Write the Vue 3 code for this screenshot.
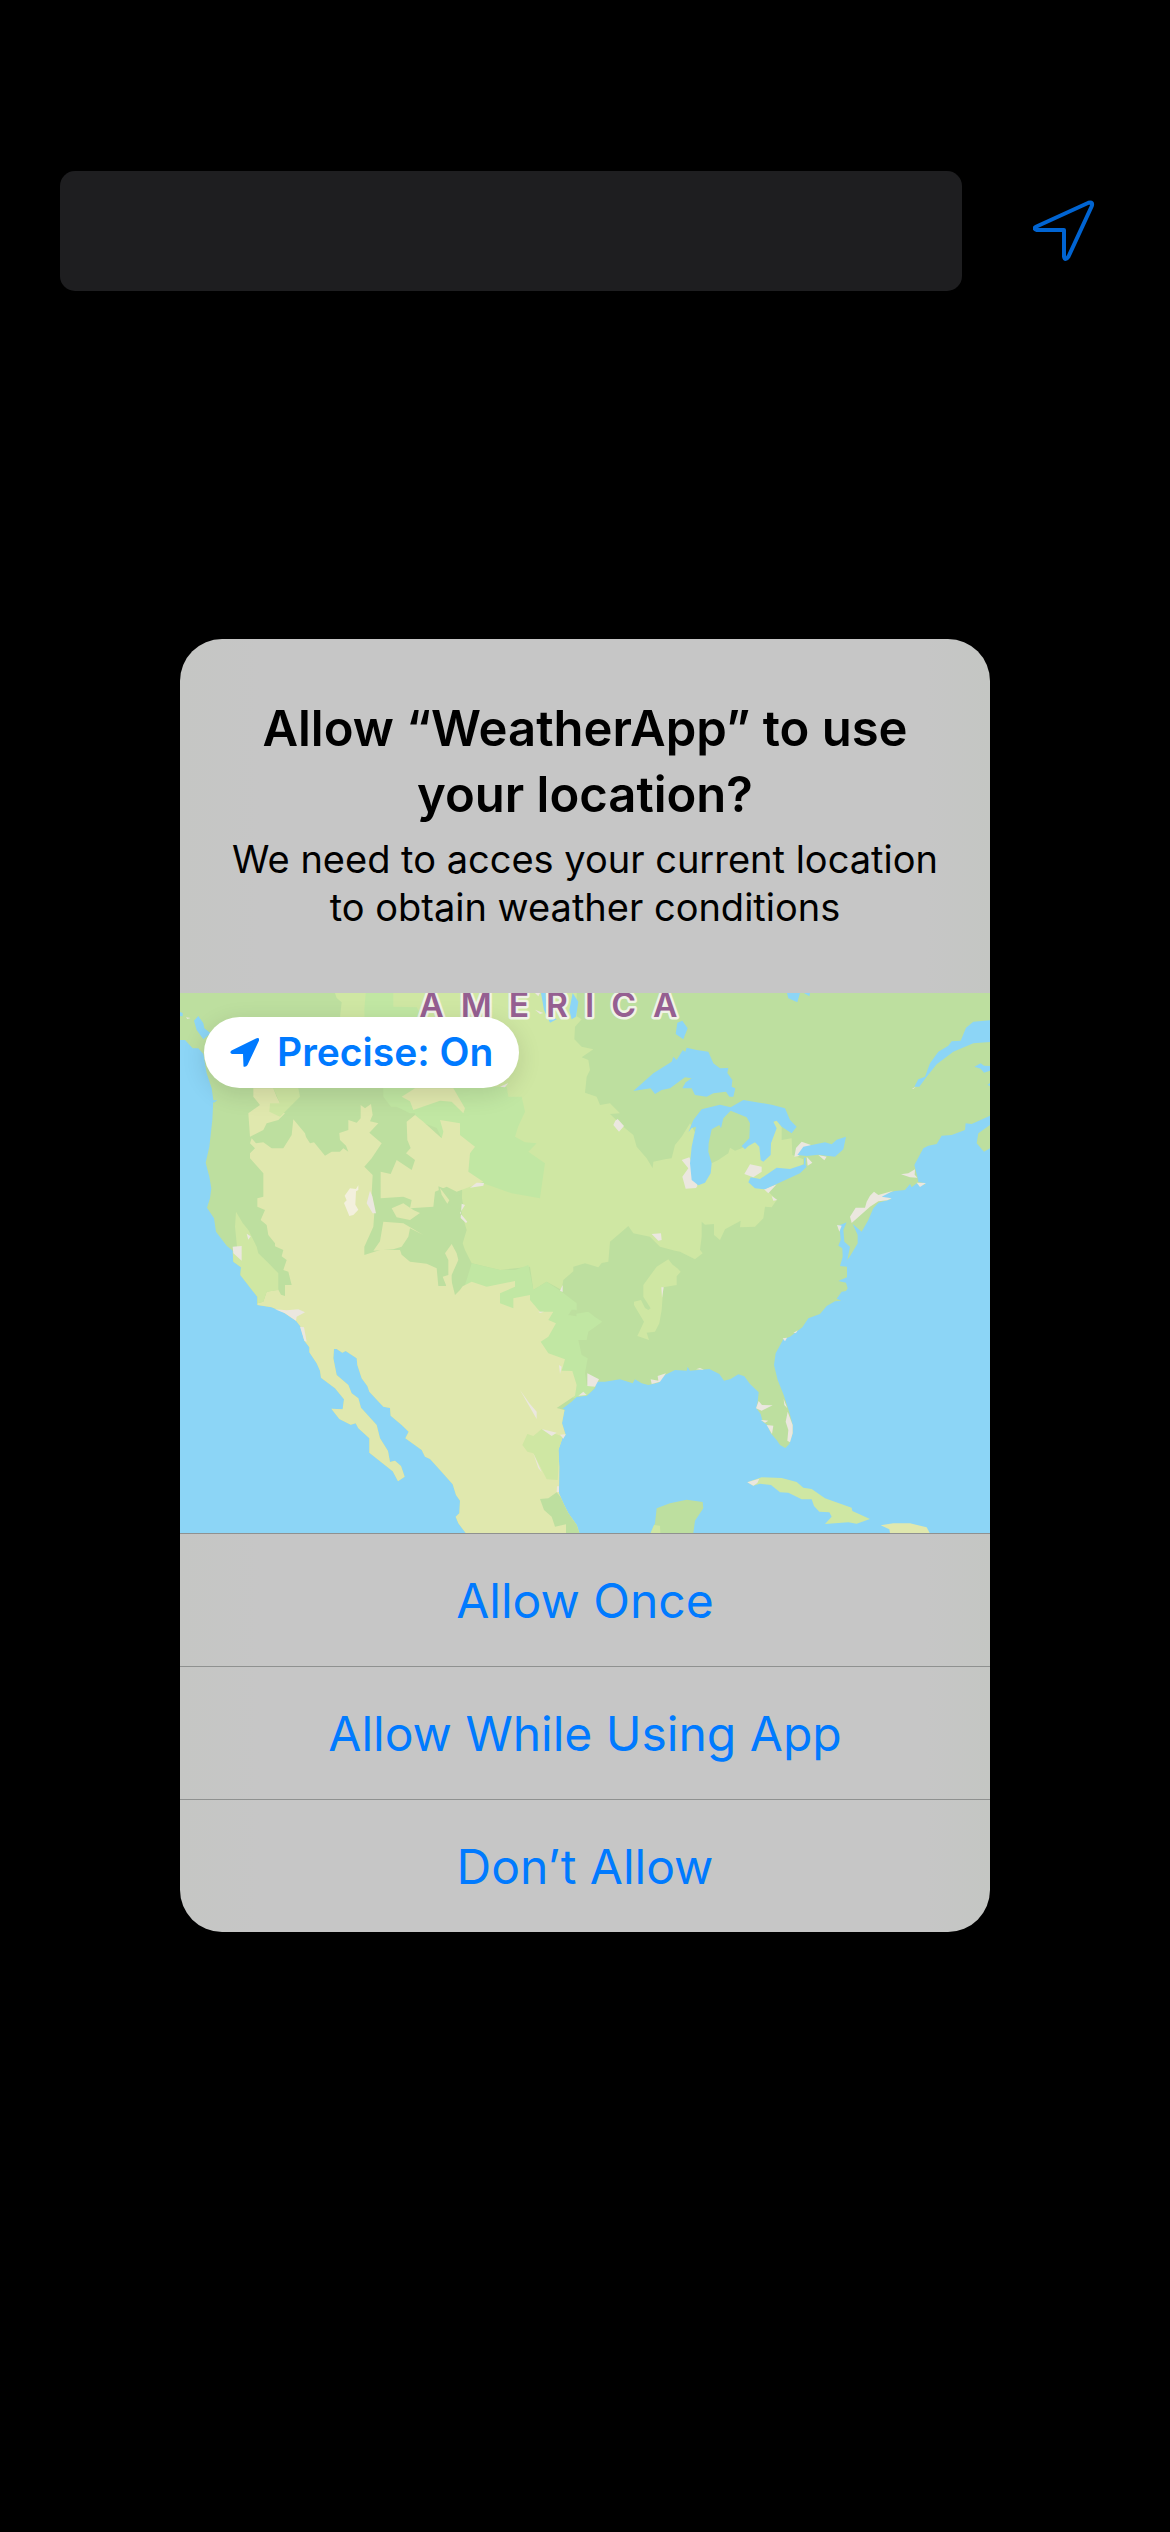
<script setup>
import { ref } from 'vue'

const query = ref('')
const precise = ref(true)
const choices = ['Allow Once', 'Allow While Using App', 'Don’t Allow']

const land =
  'M0 0V141L15 141 38 166 55 166 70 183 80 241 95 286 100 321 97 381 88 461 77 509 88 551 94 586 90 616 81 644 102 676 108 716 140 758 158 773 160 806 183 823 181 846 220 896 232 911 232 936 275 943 310 958 348 983 362 1001 373 1043 388 1063 388 1078 410 1111 420 1133 423 1154 465 1186 492 1219 488 1249 454 1247 478 1278 512 1295 527 1291 535 1306 568 1336 568 1379 638 1435 654 1465 674 1451 663 1419 645 1403 630 1407 624 1374 600 1336 590 1296 543 1244 535 1216 515 1201 505 1176 470 1146 460 1096 462 1068 470 1068 487 1079 497 1074 530 1096 532 1116 545 1156 562 1179 568 1196 610 1241 630 1245 632 1268 665 1296 686 1316 676 1336 725 1371 735 1391 750 1398 780 1431 818 1474 828 1506 840 1523 838 1561 827 1571 835 1591 857 1620 1198 1620 1190 1596 1165 1561 1150 1531 1137 1501 1138 1421 1135 1371 1147 1336 1157 1326 1146 1291 1154 1249 1147 1247 1175 1226 1190 1211 1220 1208 1245 1186 1250 1166 1275 1166 1320 1159 1358 1171 1365 1159 1385 1171 1405 1176 1435 1169 1455 1146 1485 1131 1520 1133 1523 1121 1530 1133 1588 1128 1618 1143 1632 1163 1652 1158 1675 1144 1693 1150 1710 1173 1736 1198 1733 1226 1729 1246 1742 1263 1748 1286 1762 1296 1772 1321 1790 1341 1800 1356 1816 1365 1828 1353 1838 1321 1838 1296 1828 1258 1811 1206 1793 1161 1782 1116 1787 1081 1810 1039 1830 1031 1867 1003 1885 976 1920 963 1940 939 1965 925 1984 923 1970 917 1985 896 1998 894 2003 886 1998 869 1975 864 2001 853 2001 821 1980 819 1988 791 1987 766 1975 758 1982 741 1980 716 1973 698 1988 693 2000 688 1990 711 1993 746 2010 761 2002 801 2010 790 2033 751 2033 726 2018 693 2045 716 2065 681 2080 646 2095 629 2135 618 2100 616 2110 604 2145 594 2175 591 2190 573 2195 583 2210 571 2235 575 2235 571 2215 567 2212 551 2203 516 2230 466 2245 458 2270 453 2285 428 2315 426 2355 411 2357 391 2375 393 2430 368V0Z'
</script>

<template>
  <main class="screen">
    <form class="search" role="search" @submit.prevent>
      <input v-model="query" class="field" type="text" aria-label="City" />
      <button class="locate" type="button" aria-label="Use current location">
        <svg viewBox="0 0 62 62" aria-hidden="true">
          <path d="M3.500 26.500 55.500 2.800Q60.500 1.500 58.600 6.500L35.500 56.500Q32 61.500 31 56.500V30H4Q-.5 28.500 3.500 26.500Z" />
        </svg>
      </button>
    </form>

    <section class="alert" role="alertdialog" aria-labelledby="alert-title" aria-describedby="alert-text">
      <header class="message">
        <h1 id="alert-title">Allow “WeatherApp” to use your location?</h1>
        <p id="alert-text">We need to acces your current location to obtain weather conditions</p>
      </header>

      <div class="map">
        <svg viewBox="0 0 2430 1620" aria-hidden="true">
          <defs>
            <clipPath id="land-clip"><path :d="land" /></clipPath>
          </defs>
          <path class="wood" :d="land" />
          <g clip-path="url(#land-clip)">
            <!-- prairie, coastal valleys and the Appalachians -->
            <path class="plain" d="M465 0 470 15 485 28 480 71 600 100 600 290 850 400 845 661 860 711 848 751 855 771 875 811 960 831 1050 821 1060 891 1100 866 1145 891 1150 861 1180 835 1180 821 1215 811 1255 823 1265 810 1285 806 1290 746 1320 721 1345 699 1360 721 1410 731 1440 761 1485 773 1500 776 1545 799 1568 781 1560 770 1565 731 1565 686 1575 695 1602 693 1602 726 1620 741 1635 709 1682 683 1680 703 1725 701 1750 676 1755 641 1775 643 1790 621 1760 591 1870 513 1870 499 1837 486 1835 436 1805 441 1805 401 1790 380 1780 386 1760 460 1720 446 1685 466 1665 473 1650 464 1645 481 1615 501 1595 511 1530 391 1505 431 1485 456 1475 496 1455 499 1420 506 1418 526 1400 496 1370 461 1360 426 1330 401 1290 363 1320 361 1290 331 1260 336 1250 311 1215 299 1220 251 1230 231 1225 201 1205 193 1240 169 1205 161 1183 139 1185 101 1205 79 1190 70 1190 0Z" />
            <path class="wood" d="M600 280H700L665 345 705 361 680 386 682 441 678 481 705 501 640 600 600 600Z" />
            <path class="mint" d="M557 0H640V41L710 43 725 71V120H555L553 50ZM610 281H980L985 311 1025 311 1035 356 1015 400 1005 431 1035 448 1070 451 1045 476 1095 511 1080 616 995 601 910 571 840 586 780 490 785 436 770 405 705 380 705 361 690 361 650 341 633 341 610 311Z" />
            <path class="mint" d="M848 895 860 860 875 811 960 831 1005 831 1045 816 1060 891 1100 866 1145 896 1190 931 1190 951 1165 966 1225 956 1245 972 1267 986 1225 1016 1220 1041 1195 1041 1205 1086 1223 1096 1215 1141 1220 1176 1245 1181 1220 1215 1180 1215 1000 1000Z" />
            <path class="wood" d="M1165 966 1175 950H1187L1190 970Z" />
            <path class="sand" d="M210 481 225 466 210 451 215 436 228 451 250 448 275 466 310 466 335 426 340 379 375 421 378 432 390 451 402 448 435 488 455 476 480 476 490 466 505 476 498 458 480 441 478 420 505 411 505 381 530 389 542 376 542 336 555 346 573 333 578 366 570 385 595 391 568 419 605 451 575 496 553 521 578 546 575 601 583 660 580 701 553 761 553 786 600 771 660 771 665 785 690 806 740 812 770 826 775 879 798 879 798 853 810 846 825 906 840 891 848 880 875 866 920 881 1005 864 1005 881 960 901 960 931 1000 946 1000 916 1050 906 1050 921 1080 956 1120 956 1105 981 1128 991 1105 1031 1082 1046 1105 1081 1155 1099 1145 1133 1177 1134 1190 1176 1185 1208 1130 1245 1300 1290 1300 1620 300 1620 200 940 232 931 250 926 260 896 295 890 303 905 315 909 315 876 335 876 325 836 310 831 320 801 305 790 310 771 285 760 285 751 265 726 260 696 242 681 255 651 232 641 232 616 250 611 250 541 210 496ZM220 286H280L290 311 303 336 270 350 315 361 295 381 260 391 250 411 210 431 205 361 240 336 220 311Z" />
            <path class="plain" d="M280 286H355L360 311 300 371 268 356 270 331 300 331ZM168 656 188 690 205 711 230 761 235 781 265 810 295 841V891L260 896 250 926 200 940 120 800 172 770 165 701Z" />
            <path class="sand" d="M705 366 680 386 682 441 692 465 678 481 705 501 695 531 650 501 632 543 602 536V616L670 611 695 621 690 646 760 641 765 596 800 581 830 596 870 581 910 566 865 536 870 481 885 461 840 426V391L780 381 790 416 785 436 730 386ZM665 311 705 286H820L855 346 850 361 815 326 780 323 700 351 690 325ZM610 686 670 691 730 726 690 706 685 731 665 761 640 769 580 773 600 745ZM635 646 670 631 700 651 720 660 690 681 650 673ZM795 781 815 753 830 781 835 801 815 846V896L800 881 788 851 805 846V801Z" />
            <path class="wood" d="M775 580 790 586 810 605 845 610 850 640 835 650 780 620Z" />
            <path class="sand" d="M780 585 808 622 802 632 785 605Z" />
            <path class="plain" d="M1465 799 1478 815 1492 826 1502 836 1490 850V876L1450 883 1445 951 1438 991 1425 1016 1400 1019 1407 1041 1372 1029 1392 986 1362 936V926L1383 921 1395 945 1405 951 1412 946 1390 911V876L1430 821ZM1085 1308 1150 1331 1138 1380 1133 1461 1100 1459 1060 1381 1042 1376 1027 1356 1042 1323 1060 1329Z" />
            <path class="wood" d="M1080 1518 1105 1516 1130 1498 1230 1620H1158V1594L1125 1601 1115 1571 1092 1551Z" />
          </g>

          <!-- islands and peninsulas off the mainland -->
          <path class="wood" d="M2430 396 2395 421 2390 451 2412 476 2430 466ZM1412 1620 1425 1591 1430 1546 1470 1531 1520 1520 1568 1527 1570 1546 1545 1583 1540 1620Z" />
          <path class="plain" d="M1412 1620 1422 1596 1440 1598 1441 1620ZM1702 1468 1745 1453 1805 1455 1850 1467 1870 1484 1895 1488 1935 1516 2015 1544 2017 1554 2070 1578 2030 1592 2005 1588 1935 1593 1955 1571 1948 1558 1918 1556 1902 1539 1895 1519 1865 1519 1825 1499 1800 1498 1773 1476 1740 1472 1720 1478Z" />
          <path class="sand" d="M2102 1597 2140 1591 2190 1591 2240 1603 2249 1620 2130 1620 2128 1609Z" />

          <!-- towns -->
          <path class="town" d="M1505 501 1528 493 1540 520 1552 579 1548 585 1517 587 1507 551 1525 526ZM1300 396 1306 383 1313 378 1332 399 1317 416ZM1693 543 1710 514 1745 521V536L1720 553ZM1843 491 1848 465 1865 446 1893 456 1855 490ZM1880 491 1897 509 1883 518ZM1752 589 1790 574 1765 601ZM1775 609 1792 621 1780 623ZM1915 486 1940 491 1933 502ZM2060 626 2070 608 2082 596 2095 606 2140 593 2105 611 2135 616 2122 622 2095 625 2070 641 2015 690 2010 671 2027 644 2055 644ZM2163 544 2185 541 2205 529 2204 545 2212 554 2190 553ZM2210 569 2238 570 2220 582ZM1971 696 1985 698 1978 716ZM158 761 185 759V803L160 781ZM200 722 212 730 205 740ZM285 949 320 952 355 949 375 958 350 971 348 983 315 961ZM360 1001 372 1003 380 1046 373 1043ZM1222 1141 1257 1159 1245 1181 1222 1179ZM1195 1208 1210 1196 1220 1206ZM1412 1159 1435 1163 1433 1149 1458 1141 1440 1166 1415 1173ZM1548 1129 1560 1125 1572 1130ZM1415 723 1443 721 1445 741 1435 743ZM1736 1224 1746 1236 1778 1237 1745 1253 1728 1246ZM1742 1281 1765 1283 1755 1289ZM1760 1296 1780 1298 1776 1323ZM1811 1218 1822 1246 1813 1236ZM1823 1256 1838 1296 1838 1321 1830 1348 1822 1343 1825 1311 1817 1286ZM1808 1036 1821 1034 1815 1045ZM1840 1020 1853 1012 1848 1020ZM1702 1468 1738 1457 1732 1470 1720 1478ZM845 632 855 636 840 660 862 686 858 690 842 675ZM870 584 890 569 912 570 910 578ZM960 281 985 270 975 283ZM1140 893 1148 876V897ZM1137 1116 1145 1121 1140 1143ZM1085 1308 1130 1319 1115 1329ZM1140 1325 1157 1324 1150 1337ZM1020 1191 1048 1231 1070 1256V1278ZM1060 1381 1085 1438 1075 1425ZM1444 883H1451L1446 915ZM1131 1480H1137V1497H1130ZM570 593 577 610 588 661H578L560 631ZM1075 956H1092L1080 960ZM18 73 32 75 22 78ZM1065 50 1090 60 1080 63ZM1065 0H1080L1075 10ZM2196 288 2210 279 2200 288Z" />
          <path class="salt" d="M510 586 528 588 535 577V591L528 595 526 635 535 650 520 666 508 669 492 630 500 622 494 608Z" />

          <!-- lakes, sounds and the St. Lawrence -->
          <path class="water" d="M1360 294 1420 241 1475 206 1480 191 1490 201 1508 172 1516 176 1520 164 1550 171 1585 176 1600 211 1620 226 1645 225 1642 240 1657 261 1655 281 1666 286 1660 311 1648 311 1638 296 1600 301 1580 311 1545 306 1535 286 1507 286 1517 268 1535 256 1515 253 1470 286 1445 291 1425 303 1412 286ZM1507 83 1523 106 1510 139 1487 123 1492 89ZM1525 418 1540 381 1565 349 1620 335 1652 343 1690 321 1775 335 1815 346 1830 381 1850 401 1835 421 1805 401 1790 383 1780 386 1790 406 1773 451 1772 486 1750 506 1742 501 1738 461 1725 448 1705 459 1695 469 1685 459 1708 436 1710 391 1700 373 1652 353 1630 376 1623 406 1618 396 1595 409 1586 451 1585 476 1595 511 1592 541 1575 569 1555 577 1535 561 1530 511 1535 461 1548 401 1535 405ZM1705 568 1712 553 1740 558 1790 524 1830 528 1875 513 1880 521 1860 541 1790 573 1755 589 1725 586ZM1852 486 1870 461 1935 448 1955 454 1970 440 1998 431 1990 469 1965 491 1915 485 1880 489ZM1872 494H1877V514H1872ZM42 83 55 69 70 91 73 106 92 121 70 139 50 111ZM0 57 8 60 8 70 0 69ZM1083 0H1097L1100 60 1130 79 1110 89 1092 51ZM1178 0 1195 26 1188 71 1175 79 1168 51ZM1821 0 1825 16 1852 28 1860 0ZM1872 0 1888 10 1890 0ZM2430 82 2380 86 2358 104 2342 143 2315 145 2305 158 2275 176 2250 211 2235 251 2215 259 2203 281 2218 281 2240 251 2270 214 2320 176 2380 151 2430 147ZM2383 221 2402 211 2412 218 2430 219V233L2412 239 2402 227ZM2422 275 2430 270V280ZM96 322 112 322 102 329Z" />
          <text class="region" x="718" y="71">A&nbsp;&nbsp;M&nbsp;&nbsp;E&nbsp;&nbsp;R&nbsp;&nbsp;I&nbsp;&nbsp;C&nbsp;&nbsp;A</text>
        </svg>

        <button class="precise" type="button" :aria-pressed="precise" @click="precise = !precise">
          <svg viewBox="0 0 29 29" aria-hidden="true">
            <path d="M1.500 12.500 26 .5Q30-1 28.800 3L17.500 27Q16 29.500 13.500 28.500L13 16H2Q-1 14.500 1.500 12.500Z" />
          </svg>
          <span>Precise: {{ precise ? 'On' : 'Off' }}</span>
        </button>
      </div>

      <button v-for="choice in choices" :key="choice" class="choice" type="button">{{ choice }}</button>
    </section>
  </main>
</template>

<style>
body {
  margin: 0;
  background: #000;
}
</style>

<style scoped>
.screen {
  box-sizing: border-box;
  min-height: 100vh;
  padding: 171px 60px 60px;
  background: #000;
  font-family: Inter, "Liberation Sans", sans-serif;
}

button {
  margin: 0;
  padding: 0;
  border: 0;
  background: none;
  color: #007aff;
  font-family: inherit;
  cursor: pointer;
}

.search {
  display: flex;
  align-items: center;
  gap: 56px;
}

.field {
  box-sizing: border-box;
  flex: 1;
  min-width: 0;
  height: 120px;
  padding: 0 24px;
  border: 0;
  border-radius: 15px;
  background: #1e1e20;
  color: #fff;
  font-family: inherit;
  font-size: 48px;
}

.locate {
  display: flex;
  justify-content: center;
  width: 92px;
}

.locate svg {
  width: 62px;
  height: 62px;
  fill: none;
  stroke: #0064d2;
  stroke-width: 4;
  stroke-linejoin: round;
}

.alert {
  overflow: hidden;
  width: min(810px, 100%);
  margin: 348px auto 0;
  border-radius: 42px;
  background: linear-gradient(90deg, #c5c6c4, #c6c6c6 10%, #c6c6c6 92%, #c4c6c3);
}

.message {
  padding: 57px 42px 62px;
  color: #000;
  text-align: center;
}

.message h1 {
  margin: 0 auto;
  max-width: 680px;
  font-size: 49px;
  font-weight: 600;
  line-height: 66px;
}

.message p {
  margin: 7px 0 0;
  font-size: 38px;
  line-height: 48px;
}

.map {
  position: relative;
  background: #8cd5f6;
}

.map > svg {
  display: block;
  width: 100%;
}

.water { fill: #8cd5f6; }
.wood { fill: #bddf9f; }
.plain { fill: #cfe7a3; }
.mint { fill: #c1e7a3; }
.sand { fill: #e0e8ae; }
.town { fill: #ebe7df; }
.salt { fill: #f3f0dd; }

.region {
  fill: #955f91;
  stroke: #f0f3e6;
  stroke-width: 15px;
  stroke-linejoin: round;
  paint-order: stroke;
  font-size: 101px;
  font-weight: 600;
}

.precise {
  position: absolute;
  top: 24px;
  left: 24px;
  display: flex;
  align-items: center;
  gap: 18px;
  height: 71px;
  padding: 0 26px;
  border-radius: 36px;
  background: #fff;
  box-shadow: 0 6px 24px rgba(0, 0, 0, 0.12);
  font-size: 39px;
  font-weight: 600;
  line-height: 48px;
}

.precise svg {
  width: 29px;
  height: 29px;
  fill: #007aff;
}

.precise span {
  padding-bottom: 2px;
}

.choice {
  box-sizing: border-box;
  display: block;
  width: 100%;
  height: 133px;
  border-top: 1px solid #8f9190;
  font-size: 48px;
}
</style>
